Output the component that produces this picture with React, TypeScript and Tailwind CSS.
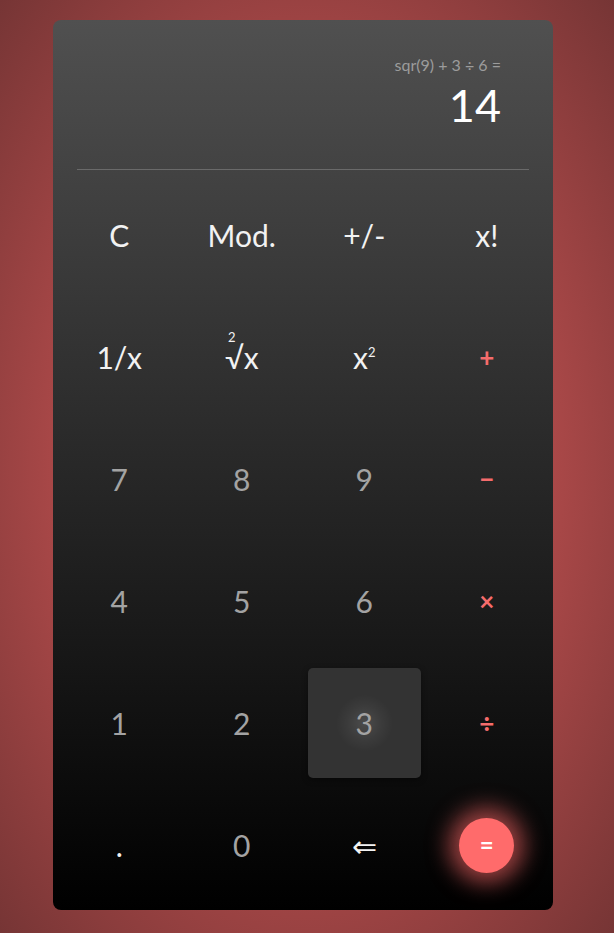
import React from 'react';

type Key = { label: React.ReactNode; kind: 'fn' | 'num' | 'op' | 'eq' | 'white'; active?: boolean };

// --- Keypad layout, row by row ---
const keys: Key[] = [
  { label: 'C', kind: 'fn' },
  { label: 'Mod.', kind: 'fn' },
  { label: '+/-', kind: 'fn' },
  { label: 'x!', kind: 'fn' },
  { label: '1/x', kind: 'fn' },
  {
    label: (
      <span className="relative">
        <span className="absolute -top-[4px] left-[3px] text-[13px] leading-none">2</span>√x
      </span>
    ),
    kind: 'fn',
  },
  {
    label: (
      <span>
        x<span className="relative -top-[12px] text-[13px]">2</span>
      </span>
    ),
    kind: 'fn',
  },
  { label: '+', kind: 'op' },
  { label: '7', kind: 'num' },
  { label: '8', kind: 'num' },
  { label: '9', kind: 'num' },
  { label: '−', kind: 'op' },
  { label: '4', kind: 'num' },
  { label: '5', kind: 'num' },
  { label: '6', kind: 'num' },
  { label: '×', kind: 'op' },
  { label: '1', kind: 'num' },
  { label: '2', kind: 'num' },
  { label: '3', kind: 'num', active: true },
  { label: '÷', kind: 'op' },
  { label: '.', kind: 'white' },
  { label: '0', kind: 'num' },
  { label: '⇐', kind: 'white' },
  { label: '=', kind: 'eq' },
];

const CalcKey: React.FC<{ k: Key }> = ({ k }) => {
  if (k.kind === 'eq') {
    return (
      <div className="flex items-center justify-center">
        <button className="w-[55px] h-[55px] rounded-full bg-[#ff6b6b] text-white text-[24px] font-bold shadow-[0_0_22px_10px_rgba(255,105,105,0.6)] flex items-center justify-center">
          =
        </button>
      </div>
    );
  }
  const color =
    k.kind === 'fn' ? 'text-[#f2f2f2] text-[30px]' :
    k.kind === 'op' ? 'text-[#f56c6c] text-[26px] font-bold' :
    k.kind === 'white' ? 'text-[#f2f2f2] text-[30px]' :
    'text-[#a3a3a3] text-[30px]';
  return (
    <button
      className={`flex items-center justify-center rounded-[5px] ${color} ${
        k.active
          ? 'bg-[#333333] bg-[radial-gradient(circle,rgba(255,255,255,0.12)_0%,rgba(255,255,255,0.04)_22%,rgba(255,255,255,0)_36%)] shadow-[0_2px_6px_rgba(0,0,0,0.4)]'
          : ''
      }`}
    >
      {k.label}
    </button>
  );
};

export default function App() {
  return (
    <div
      className="w-[614px] h-[933px] flex pl-[53px] pt-[20px] bg-[radial-gradient(ellipse_at_center,#c95858_0%,#b24b4b_50%,#763535_100%)]"
      style={{ fontFamily: 'Lato, "Noto Sans", sans-serif' }}
    >
      <div className="w-[500px] h-[890px] rounded-[8px] bg-[linear-gradient(to_bottom,#505050,#000000)] flex flex-col">
        <div className="h-[149px] pr-[52px] pt-[35px] flex flex-col items-end">
          <div className="text-[16px] text-[#9c9c9c] leading-[20px]">sqr(9) + 3 ÷ 6 =</div>
          <div className="text-[45px] text-white leading-[56px] mt-[2px]">14</div>
        </div>
        <div className="mx-[24px] h-px bg-[#6a6a6a]" />
        <div className="mt-[10px] px-[10px] grid grid-cols-4 grid-rows-6 gap-x-[10px] gap-y-[12px] h-[720px]">
          {keys.map((k, i) => (
            <CalcKey key={i} k={k} />
          ))}
        </div>
      </div>
    </div>
  );
}
